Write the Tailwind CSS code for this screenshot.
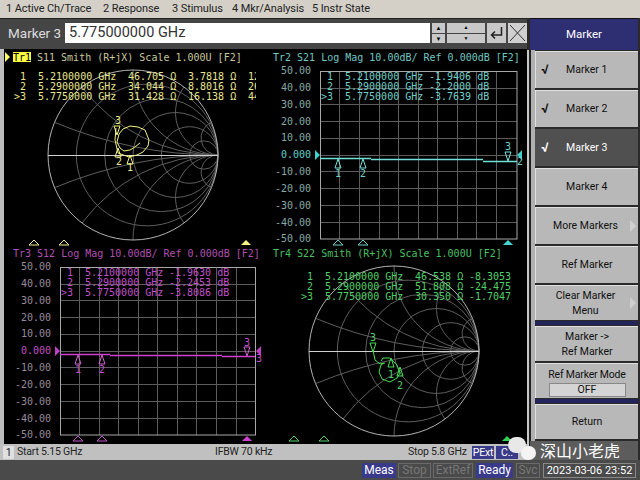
<!DOCTYPE html>
<html lang="en">
<head>
  <meta charset="UTF-8" />
  <title>Network Analyzer - Marker</title>
  <script src="https://cdn.jsdelivr.net/npm/@tailwindcss/browser@4"></script>
</head>
<body class="w-[640px] h-[480px] overflow-hidden relative bg-[#4a4a4a] font-['Roboto',sans-serif] text-[11px] text-black">

  <!-- shared chart parts -->
  <svg class="absolute w-0 h-0">
    <defs>
      <g id="smith" fill="none">
        <g class="stroke-[#5e5e5e]">
          <circle cx="14.17" cy="0" r="70.83" />
          <circle cx="28.33" cy="0" r="56.67" />
          <circle cx="42.5" cy="0" r="42.5" />
          <circle cx="56.67" cy="0" r="28.33" />
          <circle cx="70.83" cy="0" r="14.17" />
          <path d="M85 0A425 425 0 0 1 -78.5 -32.7M85 0A170 170 0 0 1 -51 -68M85 0A85 85 0 0 1 0 -85M85 0A42.5 42.5 0 0 1 51 -68M85 0A17 17 0 0 1 78.5 -32.7" />
          <path d="M85 0A425 425 0 0 0 -78.5 32.7M85 0A170 170 0 0 0 -51 68M85 0A85 85 0 0 0 0 85M85 0A42.5 42.5 0 0 0 51 68M85 0A17 17 0 0 0 78.5 32.7" />
        </g>
        <circle cx="0" cy="0" r="85" class="stroke-[#b4b4b4]" />
        <path d="M-85 0.5H85" class="stroke-[#d0d0d0]" />
      </g>
      <path id="up" d="M0 0L-3 9H3Z" fill="none" />
      <path id="down" d="M0 9L-3 0H3Z" fill="none" />
      <path id="tick" d="M0 0L-5 5H5Z" />
    </defs>
  </svg>

  <!-- menu bar -->
  <div class="h-[18px] bg-[#d4d0c8] relative flex items-center text-[11px] tracking-[-0.1px] text-[#222] whitespace-nowrap">
    <span class="w-[103px] pl-[6px]">1 Active Ch/Trace</span>
    <span class="w-[69px]">2 Response</span>
    <span class="w-[60px]">3 Stimulus</span>
    <span class="w-[80px]">4 Mkr/Analysis</span>
    <span>5 Instr State</span>
  </div>

  <div class="flex h-[442px]">
    <div class="w-[527px] flex flex-col">
      <!-- entry bar -->
      <div class="h-[31px] bg-[#454545] border-t border-[#222] flex items-center pl-[8px] pb-[2px] gap-[2px]">
        <span class="w-[55px] text-[13.5px] text-[#ddd] whitespace-nowrap">Marker 3</span>
        <div class="w-[365px] h-[20px] bg-white text-[14.5px] leading-[20px] pl-[4px] text-[#333]">5.775000000 GHz</div>
        <div class="w-[13px] h-[20px] flex flex-col gap-px">
          <div class="flex-1 bg-[#c8c8c8] text-[6px] leading-[9px] text-center">▲</div>
          <div class="flex-1 bg-[#c8c8c8] text-[6px] leading-[9px] text-center">▼</div>
        </div>
        <div class="w-[38px] h-[20px] flex flex-col gap-px">
          <div class="flex-1 bg-[#c8c8c8] text-[5px] leading-[9px] text-center">▲</div>
          <div class="flex-1 bg-[#c8c8c8] text-[5px] leading-[9px] text-center">▼</div>
        </div>
        <div class="w-[19px] h-[20px] bg-[#c8c8c8] flex items-center justify-center">
          <svg width="15" height="14" viewBox="0 0 15 14" fill="none" class="stroke-[#222] stroke-[1.5]"><path d="M12.5 1V9H3M6 5.5L2.5 9L6 12.5" /></svg>
        </div>
        <div class="w-[19px] h-[20px] bg-[#d0d0d0] flex items-center justify-center">
          <svg width="17" height="18" viewBox="0 0 17 18" fill="none" class="stroke-[#333]"><path d="M1 1L16 17M16 1L1 17" /></svg>
        </div>
      </div>

      <!-- traces -->
      <div class="h-[395px] bg-black border-l-[4px] border-[#bdbdbd] grid grid-cols-[264px_259px] grid-rows-[197px_198px] font-['DejaVu_Sans_Mono',monospace] text-[10px]">

        <svg width="264" height="197" viewBox="4 49 264 197">
          <defs><clipPath id="clip-s11"><rect x="4" y="49" width="252" height="60" /></clipPath></defs>
          <path d="M5 52L10 57L5 62Z" class="fill-[#ffff66]" />
          <rect x="13" y="52" width="18" height="10" class="fill-[#ffff44]" />
          <text x="13" y="61" class="fill-black">Tr1</text>
          <text x="37" y="61" class="fill-[#c8c89a]">S11 Smith (R+jX) Scale 1.000U [F2]</text>
          <use href="#smith" x="133" y="155" />
          <g class="fill-[#e8e890]" clip-path="url(#clip-s11)">
            <text y="80"><tspan x="20">1</tspan><tspan x="38">5.2100000 GHz</tspan><tspan x="128">46.705 Ω</tspan><tspan x="188">3.7818 Ω</tspan><tspan x="248">12</tspan></text>
            <text y="90"><tspan x="20">2</tspan><tspan x="38">5.2900000 GHz</tspan><tspan x="128">34.044 Ω</tspan><tspan x="188">8.8016 Ω</tspan><tspan x="248">26</tspan></text>
            <text y="100"><tspan x="14">&gt;3</tspan><tspan x="38">5.7750000 GHz</tspan><tspan x="128">31.428 Ω</tspan><tspan x="188">16.138 Ω</tspan><tspan x="248">44</tspan></text>
          </g>
          <path d="M116 128L115 140L118 153L129 157L137 155L143 152L148 146L149 140L145 130L138 127L130 126L123 129L119 134L117 142L120 148L124 151L130 150L135 147L140 143" fill="none" class="stroke-[#f4f480]" />
          <g class="stroke-[#f4f480]">
            <use href="#down" x="117" y="126" />
            <use href="#up" x="118" y="148" />
            <use href="#up" x="130" y="155" />
          </g>
          <g class="fill-[#e8e890]">
            <text x="115" y="124">3</text>
            <text x="116" y="165">2</text>
            <text x="127" y="171">1</text>
          </g>
          <g class="fill-none stroke-[#f0f090]">
            <use href="#tick" x="34" y="240" />
            <use href="#tick" x="64" y="240" />
          </g>
          <use href="#tick" x="246" y="240" class="fill-[#f4f480]" />
        </svg>

        <svg width="259" height="197" viewBox="268 49 259 197">
          <text x="273" y="61" class="fill-[#70c8c0]">Tr2 S21 Log Mag 10.00dB/ Ref 0.000dB [F2]</text>
          <g class="fill-[#86aaa6]" text-anchor="end">
            <text x="311" y="74">50.00</text>
            <text x="311" y="91">40.00</text>
            <text x="311" y="108">30.00</text>
            <text x="311" y="125">20.00</text>
            <text x="311" y="141">10.00</text>
            <text x="311" y="158" class="fill-[#5fd0c8]">0.000</text>
            <text x="311" y="175">-10.00</text>
            <text x="311" y="192">-20.00</text>
            <text x="311" y="209">-30.00</text>
            <text x="311" y="226">-40.00</text>
            <text x="311" y="242">-50.00</text>
          </g>
          <path d="M339.5 71V239M359.5 71V239M379.5 71V239M398.5 71V239M418.5 71V239M437.5 71V239M457.5 71V239M476.5 71V239M496.5 71V239M320 88.5H517M320 104.5H517M320 121.5H517M320 138.5H517M320 155.5H517M320 171.5H517M320 188.5H517M320 205.5H517M320 222.5H517" class="stroke-[#5c5c5c]" fill="none" />
          <rect x="320.5" y="71.5" width="196.5" height="167.5" fill="none" class="stroke-[#a8a8a8]" />
          <g class="fill-[#70d0c8]">
            <text y="80"><tspan x="327">1</tspan><tspan x="345">5.2100000 GHz</tspan><tspan x="429">-1.9406 dB</tspan></text>
            <text y="90"><tspan x="327">2</tspan><tspan x="345">5.2900000 GHz</tspan><tspan x="429">-2.2000 dB</tspan></text>
            <text y="100"><tspan x="321">&gt;3</tspan><tspan x="345">5.7750000 GHz</tspan><tspan x="429">-3.7639 dB</tspan></text>
          </g>
          <g class="stroke-[#70e0d8] stroke-[1.5]">
            <line x1="320" y1="158.5" x2="371" y2="158.5" />
            <line x1="371" y1="159.5" x2="483" y2="159.5" />
            <line x1="483" y1="161.5" x2="517" y2="161.5" />
          </g>
          <path d="M315 150L320 155L315 160ZM522 150L517 155L522 160Z" class="fill-[#40d0c8]" />
          <g class="stroke-[#70e0d8]">
            <use href="#up" x="338" y="159" />
            <use href="#up" x="363" y="159" />
            <use href="#down" x="508" y="152" />
          </g>
          <g class="fill-[#70d0c8]">
            <text x="335" y="177">1</text>
            <text x="360" y="177">2</text>
            <text x="505" y="150">3</text>
            <text x="517" y="165">2</text>
          </g>
          <g class="fill-none stroke-[#70d0c8]">
            <use href="#tick" x="338" y="240" />
            <use href="#tick" x="363" y="240" />
          </g>
          <use href="#tick" x="508" y="240" class="fill-[#40d8d0]" />
        </svg>

        <svg width="264" height="198" viewBox="4 246 264 198">
          <text x="13" y="257" class="fill-[#b050b0]">Tr3 S12 Log Mag 10.00dB/ Ref 0.000dB [F2]</text>
          <g class="fill-[#9a8a9a]" text-anchor="end">
            <text x="51" y="270">50.00</text>
            <text x="51" y="287">40.00</text>
            <text x="51" y="304">30.00</text>
            <text x="51" y="321">20.00</text>
            <text x="51" y="337">10.00</text>
            <text x="51" y="354" class="fill-[#c050c0]">0.000</text>
            <text x="51" y="371">-10.00</text>
            <text x="51" y="388">-20.00</text>
            <text x="51" y="405">-30.00</text>
            <text x="51" y="422">-40.00</text>
            <text x="51" y="438">-50.00</text>
          </g>
          <path d="M79.5 267V435M99.5 267V435M118.5 267V435M138.5 267V435M157.5 267V435M177.5 267V435M196.5 267V435M216.5 267V435M236.5 267V435M60 284.5H255M60 300.5H255M60 317.5H255M60 334.5H255M60 351.5H255M60 367.5H255M60 384.5H255M60 401.5H255M60 418.5H255" class="stroke-[#5c5c5c]" fill="none" />
          <rect x="60.5" y="267.5" width="195" height="167.5" fill="none" class="stroke-[#a8a8a8]" />
          <g class="fill-[#c050c8]">
            <text y="276"><tspan x="67">1</tspan><tspan x="85">5.2100000 GHz</tspan><tspan x="169">-1.9630 dB</tspan></text>
            <text y="286"><tspan x="67">2</tspan><tspan x="85">5.2900000 GHz</tspan><tspan x="169">-2.2453 dB</tspan></text>
            <text y="296"><tspan x="61">&gt;3</tspan><tspan x="85">5.7750000 GHz</tspan><tspan x="169">-3.8086 dB</tspan></text>
          </g>
          <g class="stroke-[#d040d0] stroke-[1.5]">
            <line x1="60" y1="354.5" x2="110" y2="354.5" />
            <line x1="110" y1="355.5" x2="222" y2="355.5" />
            <line x1="222" y1="356.5" x2="255" y2="356.5" />
          </g>
          <path d="M55 346L60 351L55 356ZM261 346L256 351L261 356Z" class="fill-[#c040c8]" />
          <g class="stroke-[#d060d0]">
            <use href="#up" x="78" y="355" />
            <use href="#up" x="102" y="355" />
            <use href="#down" x="247" y="347" />
          </g>
          <g class="fill-[#c050c8]">
            <text x="75" y="373">1</text>
            <text x="99" y="373">2</text>
            <text x="244" y="346">3</text>
            <text x="256" y="362">3</text>
          </g>
          <g class="fill-none stroke-[#c050c8]">
            <use href="#tick" x="78" y="436" />
            <use href="#tick" x="102" y="436" />
          </g>
          <use href="#tick" x="247" y="436" class="fill-[#d040d0]" />
        </svg>

        <svg width="259" height="198" viewBox="268 246 259 198">
          <text x="273" y="257" class="fill-[#48c060]">Tr4 S22 Smith (R+jX) Scale 1.000U [F2]</text>
          <use href="#smith" x="394" y="351" />
          <g class="fill-[#50d068]">
            <text y="280"><tspan x="307">1</tspan><tspan x="325">5.2100000 GHz</tspan><tspan x="415">46.538 Ω</tspan><tspan x="469">-8.3053</tspan></text>
            <text y="290"><tspan x="307">2</tspan><tspan x="325">5.2900000 GHz</tspan><tspan x="415">51.808 Ω</tspan><tspan x="469">-24.475</tspan></text>
            <text y="300"><tspan x="301">&gt;3</tspan><tspan x="325">5.7750000 GHz</tspan><tspan x="415">30.350 Ω</tspan><tspan x="469">-1.7047</tspan></text>
          </g>
          <path d="M373 350L375 360L380 364L385 363M381 361L383 358L390 358L397 365L400 373L397 378L390 382L382 379L379 372L381 365L384 363" fill="none" class="stroke-[#40e050]" />
          <g class="stroke-[#40e050]">
            <use href="#down" x="373" y="343" />
            <use href="#up" x="391" y="358" />
            <use href="#up" x="400" y="367" />
          </g>
          <g class="fill-[#50d068]">
            <text x="370" y="341">3</text>
            <text x="388" y="378">1</text>
            <text x="397" y="389">2</text>
          </g>
          <g class="fill-none stroke-[#50d068]">
            <use href="#tick" x="294" y="436" />
            <use href="#tick" x="324" y="436" />
          </g>
          <use href="#tick" x="507" y="436" class="fill-[#30d050]" />
        </svg>
      </div>

      <!-- channel status -->
      <div class="h-[16px] bg-[#c0c0c0] flex items-center text-[#222] text-[10.5px] tracking-[-0.2px] whitespace-nowrap">
        <span class="w-[11px] ml-[3px] h-[13px] bg-[#e0e0e0] text-center leading-[13px]">1</span>
        <span class="ml-[3px] w-[198px]">Start 5.15 GHz</span>
        <span class="w-[193px]">IFBW 70 kHz</span>
        <span class="w-[64px]">Stop 5.8 GHz</span>
        <span class="w-[22px] h-[13px] bg-[#3a3a8a] text-white text-center leading-[13px]">PExt</span>
        <span class="w-[22px] ml-[2px] h-[13px] bg-[#3a3a8a] text-white text-center leading-[13px]">C..</span>
      </div>
    </div>

    <!-- softkey strip -->
    <div class="w-[113px] flex bg-[#2a2a2a]">
      <div class="w-[8px] pt-[32px] flex shrink-0">
        <div class="w-[2px] bg-[#c8c8c8]"></div>
        <div class="w-[2px] bg-[#222]"></div>
        <div class="w-[4px] bg-[#b0b0b0]"></div>
      </div>
      <div class="w-[105px] flex flex-col">
        <div class="h-[32px] -ml-[5px] w-[108px] bg-[#2e2e72] text-white text-[11.5px] flex items-center justify-center border-t border-[#111]">Marker</div>
        <div class="pt-px flex flex-col gap-[2px] w-[103px] text-[#111] text-[10.5px]">
          <div class="h-[37px] bg-[#b8b8b8] border-t border-l border-[#e0e0e0] flex items-center pl-[30px] relative"><span class="absolute left-[5px] text-[13px] font-bold">√</span>Marker 1</div>
          <div class="h-[37px] bg-[#b8b8b8] border-t border-l border-[#e0e0e0] flex items-center pl-[30px] relative"><span class="absolute left-[5px] text-[13px] font-bold">√</span>Marker 2</div>
          <div class="h-[37px] bg-[#505050] text-white flex items-center pl-[31px] relative"><span class="absolute left-[6px] text-[13px] font-bold">√</span>Marker 3</div>
          <div class="h-[37px] bg-[#b8b8b8] border-t border-l border-[#e0e0e0] flex items-center pl-[30px]">Marker 4</div>
          <div class="h-[37px] bg-[#b8b8b8] border-t border-l border-[#e0e0e0] flex items-center justify-center pr-[3px] relative">More Markers<span class="absolute right-[2px] border-y-[6px] border-y-transparent border-l-[6px] border-l-[#d0d0d0]"></span></div>
          <div class="h-[37px] bg-[#b8b8b8] border-t border-l border-[#e0e0e0] flex items-center justify-center">Ref Marker</div>
          <div class="h-[35px] bg-[#b8b8b8] border-t border-l border-[#e0e0e0] flex items-center justify-center text-center leading-[15px] pr-[3px] relative">Clear Marker<br />Menu<span class="absolute right-[2px] border-y-[6px] border-y-transparent border-l-[6px] border-l-[#d0d0d0]"></span></div>
          <div class="h-[4px] -my-[1px] bg-[#24245c]"></div>
          <div class="h-[35px] bg-[#b8b8b8] border-t border-l border-[#e0e0e0] flex items-center justify-center text-center leading-[15px]">Marker -&gt;<br />Ref Marker</div>
          <div class="h-[35px] bg-[#b8b8b8] border-t border-l border-[#e0e0e0] flex flex-col items-center pt-[4px] leading-[14px]"><span class="tracking-[-0.2px]">Ref Marker Mode</span>
            <span class="w-[77px] h-[14px] mt-px bg-[#d4d4d4] border border-[#888] text-center leading-[12px]">OFF</span>
          </div>
          <div class="h-[4px] -my-[1px] bg-[#24245c]"></div>
          <div class="h-[35px] bg-[#b8b8b8] border-t border-l border-[#e0e0e0] flex items-center justify-center">Return</div>
        </div>
        <div class="mt-[2px] -ml-[5px] w-[108px] h-[19px] bg-[#5c5c5c] text-white text-[16px] leading-[19px] pl-[10px] font-['Noto_Sans_CJK_SC',sans-serif]">深山小老虎</div>
      </div>
    </div>
  </div>

  <!-- instrument status -->
  <div class="h-[20px] bg-[#4a4a4a] flex items-center text-[12px] pl-[362px] whitespace-nowrap">
    <span class="w-[34px] h-[15px] bg-[#3a3a8a] text-white text-center leading-[15px]">Meas</span>
    <span class="w-[33px] ml-[2px] h-[15px] border border-[#6a6a6a] text-[#777] text-center leading-[13px]">Stop</span>
    <span class="w-[40px] ml-[2px] h-[15px] border border-[#6a6a6a] text-[#777] text-center leading-[13px]">ExtRef</span>
    <span class="w-[37px] ml-[3px] h-[15px] bg-[#3a3a8a] text-white text-center leading-[15px]">Ready</span>
    <span class="w-[24px] ml-[3px] h-[15px] border border-[#6a6a6a] text-[#777] text-center leading-[13px]">Svc</span>
    <span class="w-[93px] ml-[3px] h-[15px] border border-[#888] text-white text-[11px] text-center leading-[13px]">2023-03-06 23:52</span>
  </div>

  <!-- watermark bubbles -->
  <div class="absolute left-[508px] top-[437px] w-[18px] h-[16px] rounded-full bg-[#e8e8e8]"></div>
  <div class="absolute left-[521px] top-[446px] w-[15px] h-[14px] rounded-full bg-[#f4f4f4]"></div>
</body>
</html>
